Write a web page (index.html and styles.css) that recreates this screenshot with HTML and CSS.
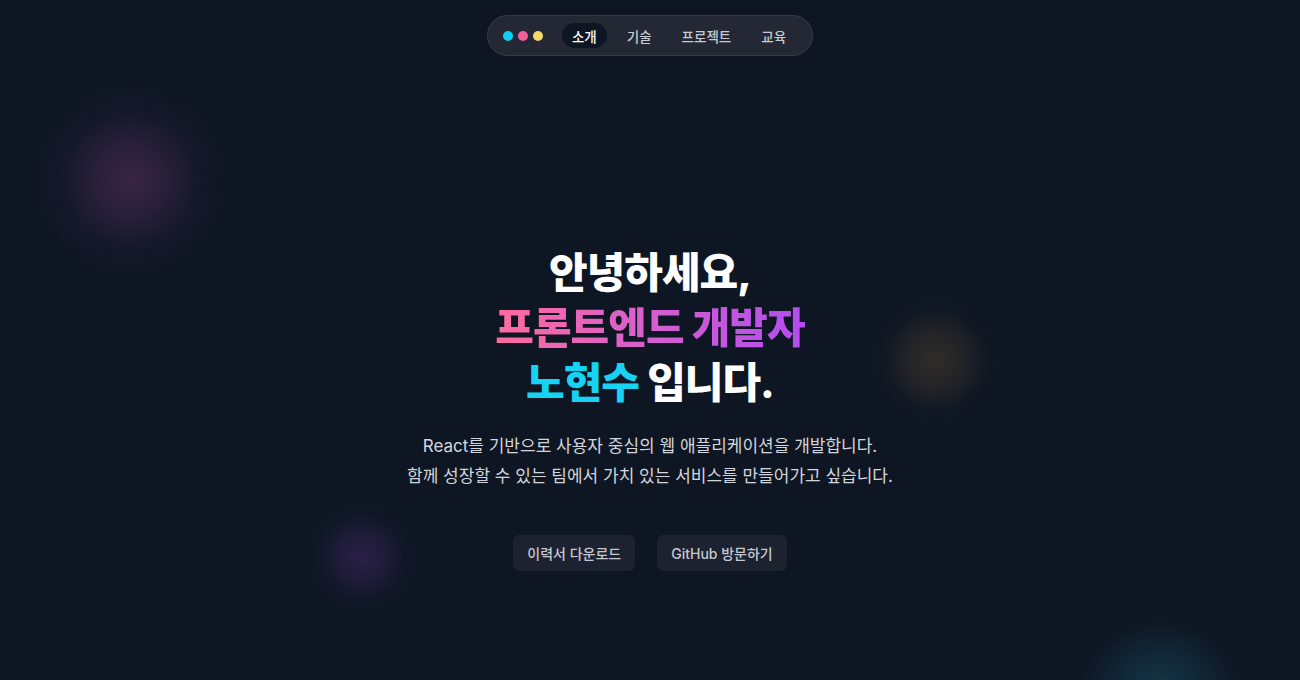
FILE: index.html
```html
<!DOCTYPE html>
<html lang="ko">
<head>
<meta charset="utf-8">
<title>노현수 포트폴리오</title>
<link rel="stylesheet" href="styles.css">
</head>
<body>
<div class="page">
  <div class="blob blob-purple"></div>
  <div class="blob blob-yellow"></div>
  <div class="blob blob-violet"></div>
  <div class="blob blob-cyan"></div>

  <header class="header">
    <nav class="nav">
      <div class="dots">
        <span class="dot dot-cyan"></span>
        <span class="dot dot-pink"></span>
        <span class="dot dot-yellow"></span>
      </div>
      <a class="nav-item active">소개</a>
      <a class="nav-item">기술</a>
      <a class="nav-item">프로젝트</a>
      <a class="nav-item">교육</a>
    </nav>
  </header>

  <main class="hero">
    <h1 class="title">
      <span class="line">안녕하세요,</span>
      <span class="line"><span class="grad">프론트엔드 개발자</span></span>
      <span class="line"><span class="cyan">노현수</span> 입니다.</span>
    </h1>
    <p class="desc">React를 기반으로 사용자 중심의 웹 애플리케이션을 개발합니다.<br>함께 성장할 수 있는 팀에서 가치 있는 서비스를 만들어가고 싶습니다.</p>
    <div class="actions">
      <a class="btn">이력서 다운로드</a>
      <a class="btn">GitHub 방문하기</a>
    </div>
  </main>
</div>
</body>
</html>
```

FILE: styles.css
```css
* { box-sizing: border-box; }
html, body {
  margin: 0;
  padding: 0;
  background: #0e1623;
}
body {
  font-family: Inter, "Noto Sans CJK KR", sans-serif;
  color: #fff;
}
.page {
  position: relative;
  width: 100%;
  height: 680px;
  overflow: hidden;
  background: #0e1623;
}
.blob {
  position: absolute;
  pointer-events: none;
}
.blob-purple {
  left: 30px; top: 80px;
  width: 200px; height: 200px;
  background: radial-gradient(closest-side, rgba(58,36,66,1) 0%, rgba(48,34,62,0.8) 35%, rgba(30,28,50,0.35) 70%, rgba(14,22,35,0) 100%);
}
.blob-yellow {
  left: 865px; top: 290px;
  width: 140px; height: 140px;
  background: radial-gradient(closest-side, rgba(48,45,40,1) 0%, rgba(42,40,40,0.75) 40%, rgba(25,30,40,0.3) 72%, rgba(14,22,35,0) 100%);
}
.blob-violet {
  left: 302px; top: 497px;
  width: 120px; height: 120px;
  background: radial-gradient(closest-side, rgba(42,32,72,1) 0%, rgba(36,30,64,0.75) 40%, rgba(22,26,48,0.3) 72%, rgba(14,22,35,0) 100%);
}
.blob-cyan {
  left: 1060px; top: 600px;
  width: 200px; height: 180px;
  background: radial-gradient(closest-side, rgba(20,54,72,1) 0%, rgba(18,46,62,0.75) 40%, rgba(16,32,46,0.3) 72%, rgba(14,22,35,0) 100%);
}

.header {
  position: relative;
  display: flex;
  justify-content: center;
  padding-top: 15px;
}
.nav {
  display: flex;
  align-items: center;
  gap: 10px;
  height: 41px;
  padding: 0 16px 0 15px;
  background: #232834;
  border: 1px solid #363b47;
  border-radius: 999px;
}
.dots {
  display: flex;
  gap: 5px;
  margin-right: 9px;
}
.dot {
  width: 10px;
  height: 10px;
  border-radius: 50%;
}
.dot-cyan { background: #12cdf6; }
.dot-pink { background: #f2629a; }
.dot-yellow { background: #f6d86a; }
.nav-item {
  display: flex;
  align-items: center;
  height: 25px;
  padding: 0 10px;
  border-radius: 999px;
  font-size: 13.5px;
  font-weight: 500;
  color: #c8cbd2;
  white-space: nowrap;
}
.nav-item.active {
  background: #0e1623;
  color: #ffffff;
}

.hero {
  position: relative;
  display: flex;
  flex-direction: column;
  align-items: center;
  text-align: center;
  padding-top: 189px;
}
.title {
  margin: 0;
  font-size: 42px;
  line-height: 55px;
  font-weight: 800;
  letter-spacing: -1px;
  color: #ffffff;
}
.line { display: block; }
.grad {
  background: linear-gradient(90deg, #ff6b9e 0%, #d45fce 50%, #b34cf2 100%);
  -webkit-background-clip: text;
  background-clip: text;
  color: transparent;
}
.cyan { color: #18d2f3; }
.desc {
  margin: 21px 0 0;
  font-size: 17px;
  line-height: 30px;
  color: #d3d6dc;
}
.actions {
  display: flex;
  gap: 22px;
  margin-top: 44px;
}
.btn {
  display: flex;
  align-items: center;
  height: 36px;
  padding: 0 14px;
  border-radius: 6px;
  background: #1c2230;
  color: #c5c8cf;
  font-size: 14px;
  font-weight: 500;
  white-space: nowrap;
}
```
